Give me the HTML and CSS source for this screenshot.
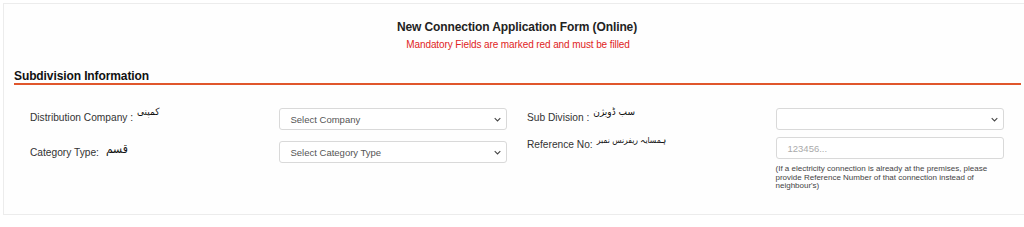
FILE: index.html
```html
<!DOCTYPE html>
<html lang="en">
<head>
<meta charset="utf-8">
<title>New Connection Application Form</title>
<link rel="stylesheet" href="styles.css">
</head>
<body>
<div class="panel">
  <h1 class="title">New Connection Application Form (Online)</h1>
  <p class="mandatory">Mandatory Fields are marked red and must be filled</p>
  <h2 class="section">Subdivision Information</h2>
  <div class="grid">
    <div class="label"><span>Distribution Company :</span> <span class="ur ur-1">کمپنی</span></div>
    <div class="field">
      <div class="select"><span>Select Company</span><svg class="chev" viewBox="0 0 10 6" width="7" height="5"><path d="M1 1l4 4 4-4" fill="none" stroke="#444" stroke-width="1.5"/></svg></div>
    </div>
    <div class="label"><span>Sub Division :</span> <span class="ur ur-3">سب ڈویژن</span></div>
    <div class="field">
      <div class="select"><span></span><svg class="chev" viewBox="0 0 10 6" width="7" height="5"><path d="M1 1l4 4 4-4" fill="none" stroke="#444" stroke-width="1.5"/></svg></div>
    </div>

    <div class="label row2"><span>Category Type:</span> <span class="ur ur-2">قسم</span></div>
    <div class="field row2">
      <div class="select"><span>Select Category Type</span><svg class="chev" viewBox="0 0 10 6" width="7" height="5"><path d="M1 1l4 4 4-4" fill="none" stroke="#444" stroke-width="1.5"/></svg></div>
    </div>
    <div class="label row2b"><span>Reference No:</span><span class="ur ur-4">ہمسایہ ریفرنس نمبر</span></div>
    <div class="field row2b">
      <div class="input"><span class="ph">123456...</span></div>
      <p class="help">(If a electricity connection is already at the premises, please provide Reference Number of that connection instead of neighbour's)</p>
    </div>
  </div>
</div>
</body>
</html>
```
FILE: styles.css
```css
html, body {
  margin: 0;
  padding: 0;
  background: #ffffff;
}
body {
  font-family: "Liberation Sans", Arial, sans-serif;
  color: #333;
}
.panel {
  margin: 3px 0 0 3px;
  height: 210px;
  border: 1px solid #ececec;
  border-right: none;
  background: #fefefe;
}
.title {
  margin: 0;
  padding: 16px 0 0 6px;
  text-align: center;
  font-size: 12px;
  font-weight: bold;
  color: #222;
  line-height: 15px;
  letter-spacing: -0.1px;
}
.mandatory {
  margin: 4px 0 0;
  padding-left: 8px;
  text-align: center;
  font-size: 10px;
  line-height: 12px;
  color: #e02424;
  letter-spacing: -0.1px;
}
.section {
  margin: 18px 3px 0 10px;
  font-size: 12px;
  font-weight: bold;
  color: #111;
  line-height: 14px;
  padding-bottom: 0;
  border-bottom: 2px solid #e0562c;
  letter-spacing: -0.1px;
}
.grid {
  display: grid;
  grid-template-columns: 228px 228px 228px 228px;
  column-gap: 20.5px;
  margin: 23px 0 0 26px;
}
.label {
  font-size: 10.2px;
  color: #333;
  display: flex;
  align-items: flex-start;
  gap: 4px;
  padding-top: 4px;
}
.label .ur {
  font-family: "DejaVu Sans Condensed", "DejaVu Sans", sans-serif;
  font-size: 10px;
  color: #111;
  margin-top: -6px;
  direction: rtl;
}
.label .ur-2 {
  margin-left: 3px;
  margin-top: -5px;
  font-size: 12px;
}
.label .ur-4 {
  font-size: 8.5px;
  margin-top: -4px;
}
.select, .input {
  height: 20px;
  border: 1px solid #d9d9d9;
  border-radius: 3px;
  background: #fff;
  display: flex;
  align-items: center;
  justify-content: space-between;
  padding: 0 5px 0 11px;
  font-size: 9.5px;
  color: #555;
}
.chev {
  display: block;
}
.row2 {
  margin-top: 11px;
}
.row2.label {
  padding-top: 6px;
}
.row2b {
  margin-top: 7px;
}
.row2b.label {
  padding-top: 2px;
}
.ph {
  color: #aaa;
  font-size: 9.5px;
}
.help {
  margin: 6px 0 0;
  font-size: 8px;
  line-height: 8.5px;
  color: #444;
  width: 215px;
}
```
